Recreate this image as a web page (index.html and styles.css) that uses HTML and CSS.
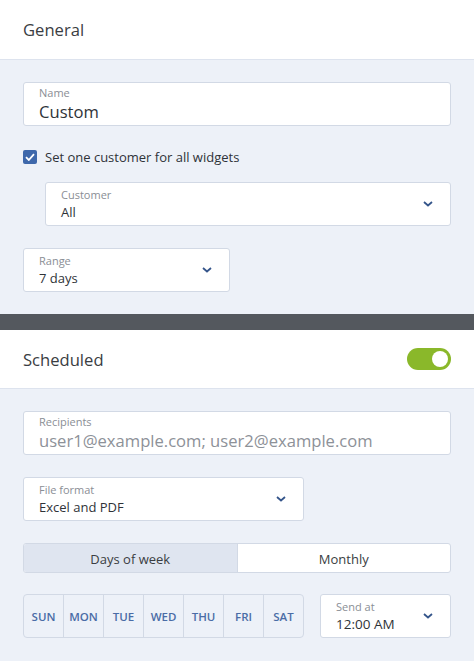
FILE: index.html
```html
<!DOCTYPE html>
<html>
<head>
<meta charset="utf-8">
<link rel="stylesheet" href="styles.css">
</head>
<body>
<section class="card">
  <header class="card-head"><h2>General</h2></header>
  <div class="card-body">
    <div class="field">
      <span class="label">Name</span>
      <span class="value big">Custom</span>
    </div>
    <label class="check-row">
      <span class="checkbox"><svg width="10" height="8" viewBox="0 0 10 8"><path d="M1 4.2 L3.8 7 L9 1.2" fill="none" stroke="#fff" stroke-width="1.8"/></svg></span>
      <span>Set one customer for all widgets</span>
    </label>
    <div class="field select indent">
      <div><span class="label">Customer</span><span class="value">All</span></div>
      <svg class="chev" width="10" height="6" viewBox="0 0 10 6"><path d="M1 1 L5 4.5 L9 1" fill="none" stroke="#34548a" stroke-width="1.8"/></svg>
    </div>
    <div class="field select range">
      <div><span class="label">Range</span><span class="value">7 days</span></div>
      <svg class="chev" width="10" height="6" viewBox="0 0 10 6"><path d="M1 1 L5 4.5 L9 1" fill="none" stroke="#34548a" stroke-width="1.8"/></svg>
    </div>
  </div>
</section>
<div class="divider"></div>
<section class="card">
  <header class="card-head"><h2>Scheduled</h2><span class="toggle"><span class="knob"></span></span></header>
  <div class="card-body second">
    <div class="field">
      <span class="label">Recipients</span>
      <span class="value big placeholder">user1@example.com; user2@example.com</span>
    </div>
    <div class="field select format">
      <div><span class="label">File format</span><span class="value">Excel and PDF</span></div>
      <svg class="chev" width="10" height="6" viewBox="0 0 10 6"><path d="M1 1 L5 4.5 L9 1" fill="none" stroke="#34548a" stroke-width="1.8"/></svg>
    </div>
    <div class="segmented">
      <span class="seg active">Days of week</span>
      <span class="seg">Monthly</span>
    </div>
    <div class="bottom-row">
      <div class="days">
        <span>SUN</span><span>MON</span><span>TUE</span><span>WED</span><span>THU</span><span>FRI</span><span>SAT</span>
      </div>
      <div class="field select sendat">
        <div><span class="label">Send at</span><span class="value">12:00 AM</span></div>
        <svg class="chev" width="10" height="6" viewBox="0 0 10 6"><path d="M1 1 L5 4.5 L9 1" fill="none" stroke="#34548a" stroke-width="1.8"/></svg>
      </div>
    </div>
  </div>
</section>
</body>
</html>
```
FILE: styles.css
```css
* { box-sizing: border-box; }
html, body { margin: 0; padding: 0; }
body {
  width: 474px;
  height: 661px;
  overflow: hidden;
  font-family: "Open Sans", "Noto Sans", sans-serif;
  color: #2f3338;
  background: #edf1f8;
}
.card { background: #edf1f8; }
.card-head {
  height: 59px;
  background: #fff;
  border-bottom: 1px solid #dde3ee;
  display: flex;
  align-items: center;
  justify-content: space-between;
  padding: 0 23px;
}
.card-head h2 {
  margin: 0;
  font-size: 16.6px;
  font-weight: 400;
  color: #3a3d42;
}
.card:first-child .card-head { height: 60px; }
.card-body {
  padding: 22px 23px 22px 23px;
  display: flex;
  flex-direction: column;
}
.field {
  background: #fff;
  border: 1px solid #d2d9e5;
  border-radius: 3px;
  height: 44px;
  padding: 3px 15px 0 15px;
  display: flex;
  flex-direction: column;
}
.field .label {
  display: block;
  font-size: 11px;
  line-height: 13px;
  color: #8a8e95;
}
.field .value {
  display: block;
  font-size: 13px;
  line-height: 18px;
  margin-top: 2px;
  color: #2f3338;
}
.field .value.big { font-size: 16.6px; line-height: 21px; }
.field .value.placeholder { color: #8d9198; }
.field.select {
  flex-direction: row;
  align-items: center;
  justify-content: space-between;
  padding: 0 17px 0 15px;
}
.field.select > div { padding-top: 0; }
.chev { display: block; }
.check-row {
  display: flex;
  align-items: center;
  gap: 8px;
  height: 20px;
  margin-top: 21px;
  font-size: 13px;
  color: #2f3338;
}
.checkbox {
  width: 14px;
  height: 14px;
  border-radius: 2px;
  background: #3e68ab;
  display: flex;
  align-items: center;
  justify-content: center;
}
.field.indent { margin-left: 22px; margin-top: 15px; height: 44px; }
.field.range { width: 207px; margin-top: 22px; }
.divider { height: 16px; background: #54585e; }
.card-body.second { padding-top: 22px; }
.toggle {
  width: 44px;
  height: 22px;
  border-radius: 11px;
  background: #8ab82a;
  display: flex;
  align-items: center;
  justify-content: flex-end;
  padding: 0 3px;
}
.knob {
  width: 16px;
  height: 16px;
  border-radius: 50%;
  background: #fff;
}
.field.format { width: 281px; margin-top: 22px; }
.segmented {
  margin-top: 22px;
  height: 30px;
  display: flex;
  border: 1px solid #d2d9e5;
  border-radius: 3px;
  overflow: hidden;
  background: #fff;
}
.seg {
  flex: 1;
  display: flex;
  align-items: center;
  justify-content: center;
  font-size: 13px;
  padding-top: 1px;
  color: #3a3d42;
}
.seg.active { background: #dfe5f0; border-right: 1px solid #d2d9e5; }
.bottom-row {
  margin-top: 21px;
  display: flex;
  gap: 16px;
}
.days {
  display: flex;
  width: 281px;
  height: 44px;
  border: 1px solid #d2d9e5;
  border-radius: 4px;
  overflow: hidden;
}
.days span {
  flex: 1;
  display: flex;
  align-items: center;
  justify-content: center;
  font-size: 11.5px;
  font-weight: 600;
  padding-top: 1px;
  color: #4a6ca6;
  border-right: 1px solid #d2d9e5;
}
.days span:last-child { border-right: none; }
.field.sendat { flex: 1; height: 44px; }
.field.sendat .value { font-size: 13.5px; }
```
